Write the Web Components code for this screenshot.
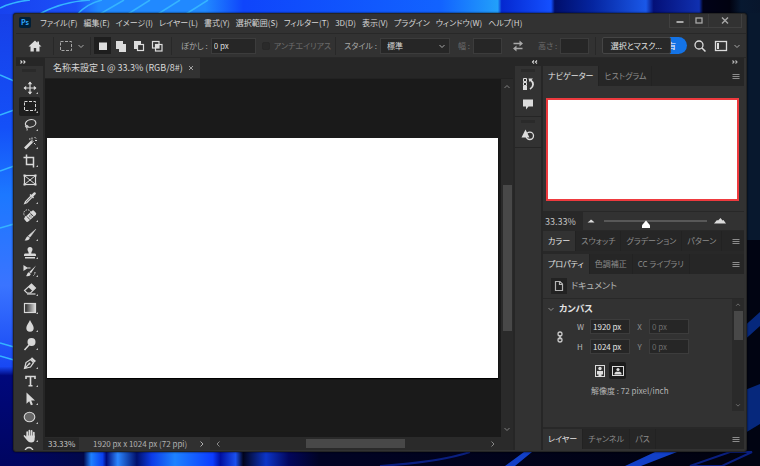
<!DOCTYPE html>
<html lang="ja">
<head>
<meta charset="utf-8">
<title>名称未設定 1</title>
<style>
  html, body { height: 100%; }
  body {
    margin: 0;
    overflow: hidden;
    background: #02051c;
    color: #d6d6d6;
    font-family: "Noto Sans CJK JP", "Open Sans", sans-serif;
    font-size: 8px;
    line-height: 12px;
    font-feature-settings: "palt";
  }
</style>
</head>
<body>
<desk-top>
  <app-window>
    <menu-bar slot="menu"></menu-bar>
    <options-bar slot="options"></options-bar>
    <tool-box></tool-box>
    <doc-view></doc-view>
    <dock-strip></dock-strip>
    <side-panels></side-panels>
  </app-window>
</desk-top>

<script>
// all icons are drawn on a 16x16 grid
const icons = {
  move: '<path d="M8 2v12M2 8h12" stroke="currentColor" stroke-width="1.2"/><path d="M8 1.500l2.300 2.700H5.700zM8 14.500l2.300-2.700H5.700zM1.500 8l2.700-2.300v4.600zM14.500 8l-2.700-2.300v4.600z" fill="currentColor"/>',
  marquee: '<rect x="2.500" y="3.500" width="11" height="9" fill="none" stroke="currentColor" stroke-dasharray="3 1.500"/>',
  lasso: '<ellipse cx="8.500" cy="6.500" rx="5.300" ry="3.700" transform="rotate(-12 8 6)" fill="none" stroke="currentColor" stroke-width="1.200"/><path d="M4 8.500c-1.500 1.500 1 2.600 2 1.200S4 8 4 9.500s1.800 2 1 4" fill="none" stroke="currentColor"/>',
  wand: '<path d="M3 13.500l7-7" stroke="currentColor" stroke-width="2.600"/><path d="M10 2.500v2M13 5.500h2M12.500 2l1.500 1.500M7 4h1.500M12 8l1.500 1.500M9.500 5l2 2" stroke="currentColor"/>',
  crop: '<path d="M4.500 1.500v10h7M1.500 4.500h10v10" fill="none" stroke="currentColor" stroke-width="1.500"/>',
  frame: '<rect x="2.500" y="3.500" width="11" height="9" fill="none" stroke="currentColor" stroke-width="1.200"/><path d="M3 4l10 8M13 4L3 12" stroke="currentColor"/><path d="M1.500 2.500h2v2h-2zM12.500 2.500h2v2h-2zM1.500 11.500h2v2h-2zM12.500 11.500h2v2h-2z" fill="currentColor"/>',
  dropper: '<path d="M9 6L3.500 11.500l-.8 2 2-.8L10 7.300" fill="none" stroke="currentColor" stroke-width="1.200"/><path d="M7.500 5l1-1 1 .7L11.800 2.500c1.300-1 2.800.5 1.800 1.800l-2.300 2.300.7 1-1 1z" fill="currentColor"/>',
  heal: '<circle cx="5.500" cy="5.500" r="3.700" fill="none" stroke="currentColor" stroke-dasharray="1.500 1"/><rect x="1.500" y="5.500" width="13" height="5.500" rx="1.500" transform="rotate(-42 8 8)" fill="currentColor"/><path d="M5 8.500l3 3.200M8.500 5.300l3 3.200M7 8h1M8.500 9h1M8.500 7h1" stroke="#323232" stroke-width=".9"/>',
  brush: '<path d="M13.800 2.200L8 10.300 6.300 8.700z" fill="currentColor" stroke="currentColor" stroke-width=".5"/><path d="M6 9.200l1.700 1.700c0 2-2.700 3-5.200 2.300 1.500-.7 1.200-3.300 3.500-4z" fill="currentColor"/>',
  stamp: '<path d="M5.500 4.500a2.500 2.500 0 015 0c0 1.700-1.300 2-1.200 4H13q1 0 1 1.500v1H2v-1q0-1.500 1-1.500h3.700c.1-2-1.200-2.300-1.200-4zM3 12h10v1.500H3z" fill="currentColor"/>',
  history: '<path d="M14 2.500L9 10.300 7.300 9zM7 9.300l1.700 1.700c-.3 1.900-2.500 2.700-4.700 2 1.400-.7.800-3.200 3-3.700z" fill="currentColor"/><path d="M2 3v4l3-2zM4.500 5h4" fill="currentColor" stroke="currentColor" stroke-width="1.100"/><path d="M13 9c0 2.500-1 3.500-2.500 4" fill="none" stroke="currentColor" stroke-dasharray="1.500 1"/>',
  eraser: '<path d="M2.500 9.500L9.500 3l4 4-5 5H5z" fill="none" stroke="currentColor" stroke-width="1.100"/><path d="M9.500 3l4 4-3 3-4.300-4z" fill="currentColor"/><path d="M5 13h8.500" stroke="currentColor" stroke-width="1.200"/>',
  gradient: '<defs><linearGradient id="g"><stop stop-color="#222"/><stop offset="1" stop-color="#ddd"/></linearGradient></defs><rect x="2.500" y="3.500" width="11" height="9" fill="url(#g)" stroke="currentColor" stroke-width="1.200"/>',
  blur: '<path d="M8 2c1 3 3.700 5 3.700 8a3.700 3.700 0 01-7.400 0C4.300 7 7 5 8 2z" fill="currentColor"/>',
  dodge: '<circle cx="9.500" cy="6" r="4" fill="currentColor"/><path d="M7 9l-4.500 5" stroke="currentColor" stroke-width="1.500"/>',
  pen: '<path d="M2.500 13.500L4 7.500l4.500-3 3 3.200-3 4.300zM2.500 13.500L7.500 8.500" fill="none" stroke="currentColor" stroke-width="1.200"/><circle cx="7.500" cy="8.500" r="1" fill="currentColor"/><path d="M8.500 4l1.500-1.800 4 3.800-1.800 1.500z" fill="currentColor"/>',
  type: '<path d="M4 6V3.500h9V6M8.500 3.500v9M6.500 12.700h4" fill="none" stroke="currentColor" stroke-width="1.600"/>',
  select: '<path d="M4.500 1.500v11.300l2.700-2.500 1.700 4 2-.9-1.700-3.800H13z" fill="currentColor"/>',
  ellipse: '<ellipse cx="7.500" cy="8" rx="5.300" ry="4.700" fill="#666" stroke="currentColor" stroke-width="1.100"/>',
  hand: '<path d="M5.200 9V4M7.400 8V2.500M9.600 8V2.800M11.800 9V4.500M2.500 8l3 3.500" stroke="currentColor" stroke-width="1.700" stroke-linecap="round"/><path d="M4.400 7.500h8.300V11q0 3.500-3.700 3.500-2.500 0-4-2.500z" fill="currentColor"/>',
  zoom: '<circle cx="7" cy="6.500" r="4" fill="none" stroke="currentColor" stroke-width="1.500"/><path d="M10 10l4 4" stroke="currentColor" stroke-width="1.500"/>',
  search: '<circle cx="7" cy="7" r="4" fill="none" stroke="currentColor" stroke-width="1.300"/><path d="M10 10l3.500 3.500" stroke="currentColor" stroke-width="1.500"/>',
  home: '<path d="M8 2.500L1.500 8.500H3.500v5h3.300v-3.500h2.400v3.500h3.300v-5h2L12 6.200V3.500h-1.700v1.200z" fill="currentColor"/>',
  selNew: '<rect x="4" y="4.500" width="8" height="7.500" fill="currentColor"/>',
  selAdd: '<path d="M3 3h7v3h3v8H6v-3H3z" fill="currentColor"/>',
  selSub: '<path d="M3 3h7v3H6v5H3z" fill="currentColor"/><rect x="6.500" y="6.500" width="6" height="6" fill="none" stroke="currentColor" stroke-width="1.200"/>',
  selInt: '<rect x="3.500" y="3.500" width="6.500" height="6.500" fill="none" stroke="currentColor" stroke-width="1.200"/><rect x="6.500" y="6.500" width="6.500" height="6.500" fill="none" stroke="currentColor" stroke-width="1.200"/><rect x="7" y="7" width="3" height="3" fill="currentColor"/>',
  swap: '<path d="M3.500 5.500h7M12.500 10.500h-7" stroke="currentColor" stroke-width="1.500"/><path d="M9.500 2.500L13 5.500l-3.500 3zM6.500 7.500L3 10.500l3.500 3z" fill="currentColor"/>',
  workspace: '<rect x="2.500" y="3.500" width="11" height="9" fill="none" stroke="currentColor" stroke-width="1.300"/><path d="M5 5v6" stroke="currentColor" stroke-width="2"/>',
  down: '<path d="M5.500 7L8 9.500 10.500 7" fill="none" stroke="currentColor"/>',
  up: '<path d="M5.500 9L8 6.500 10.500 9" fill="none" stroke="currentColor"/>',
  left: '<path d="M9.500 5.500L7 8l2.500 2.500" fill="none" stroke="currentColor"/>',
  right: '<path d="M6.500 5.500L9 8l-2.500 2.500" fill="none" stroke="currentColor"/>',
  expand: '<path d="M4.500 6.500L6 8l-1.500 1.500M7.500 6.500L9 8 7.500 9.500" fill="none" stroke="currentColor" stroke-width="1.100"/>',
  collapse: '<path d="M9 6.500L7.500 8 9 9.500M12 6.500L10.500 8 12 9.500" fill="none" stroke="currentColor" stroke-width="1.100"/>',
  menu: '<path d="M4.500 6.500h7M4.500 8.500h7M4.500 10.500h7" stroke="currentColor"/>',
  close: '<path d="M6 6l4 4M10 6l-4 4" stroke="currentColor"/>',
  winMin: '<path d="M4.500 9h7" stroke="currentColor" stroke-width="2"/>',
  winMax: '<rect x="5" y="5" width="6" height="5" fill="none" stroke="currentColor" stroke-width="1.300"/>',
  winClose: '<path d="M5 4.500l6 6M11 4.500l-6 6" stroke="currentColor" stroke-width="1.400"/>',
  historyPanel: '<path d="M3.500 2.500h3v3h-3zM3.500 6.500h3v3h-3z" fill="none" stroke="currentColor"/><path d="M3 10h4v4H3zM8.500 2.500h4.500L9.500 6z" fill="currentColor"/><path d="M10.500 4c3.500 2.500 3.500 6.500-.5 9" fill="none" stroke="currentColor" stroke-width="1.800"/>',
  comment: '<path d="M3 3.500h10v7H8.500L6 13.500v-3H3z" fill="currentColor"/>',
  shapes: '<path d="M5.500 2.500l4 8h-8z" fill="currentColor"/><circle cx="9.800" cy="8.800" r="3.700" fill="none" stroke="currentColor" stroke-width="1.300"/>',
  page: '<path d="M4.500 3.500h4.500l2.500 2.500v6.500h-7zM8.500 3.500v3h3" fill="none" stroke="currentColor" stroke-width="1.200"/>',
  link: '<rect x="6" y="3" width="4" height="4" rx="2" fill="none" stroke="currentColor" stroke-width="1.300"/><rect x="6" y="9" width="4" height="4" rx="2" fill="none" stroke="currentColor" stroke-width="1.300"/><path d="M8 6v4.500" stroke="currentColor" stroke-width="1.500"/>',
  portrait: '<rect x="3.500" y="2.500" width="9" height="11" fill="none" stroke="currentColor"/><circle cx="8" cy="5.500" r="1.700" fill="currentColor"/><path d="M5 8h6v3.500H9.500V13h-3v-1.500H5z" fill="currentColor"/>',
  landscape: '<rect x="2.500" y="3.500" width="11" height="9" fill="none" stroke="currentColor"/><circle cx="8" cy="6.500" r="1.600" fill="currentColor"/><path d="M4.500 11.500V10L6 8.700h4L11.500 10v1.500z" fill="currentColor"/>',
  hillSmall: '<path d="M4.500 9.500l2-1.500 1.500-1.500L10 8l1.500 1.500z" fill="currentColor"/>',
  hillLarge: '<path d="M2 10.500l3-3.500 1 .5L8.500 5l2 2.500 1-.5 2.500 3.500z" fill="currentColor"/>',
};

function tpl(html) {
  const t = document.createElement('template');
  t.innerHTML = html;
  return t;
}

// common rules every shadow root starts with
const base = `
  <style>
    *, :host { box-sizing: border-box; }
    button, input, select {
      margin: 0;
      padding: 0;
      border: 0;
      border-radius: 0;
      outline: none;
      background: none;
      color: inherit;
      font: inherit;
      font-feature-settings: inherit;
    }
    button { display: flex; align-items: center; justify-content: center; white-space: nowrap; }
  </style>
`;

class BaseElement extends HTMLElement {
  constructor() {
    super();
    this._shadowRoot = this.attachShadow({ mode: 'open' });
    this._shadowRoot.appendChild(tpl(base).content.cloneNode(true));
    this._shadowRoot.appendChild(this.constructor.template.content.cloneNode(true));
  }
}

class PsIcon extends HTMLElement {
  constructor() {
    super();
    this.attachShadow({ mode: 'open' });
  }

  static get observedAttributes() {
    return ['name'];
  }

  attributeChangedCallback(name, oldValue, newValue) {
    this.shadowRoot.innerHTML = `
      <style>
        :host { display: block; width: 16px; height: 16px; flex: none; }
        svg { display: block; width: 100%; height: 100%; }
      </style>
      <svg viewBox="0 0 16 16" fill="none" aria-hidden="true">${icons[newValue]}</svg>
    `;
  }
}

class DeskTop extends BaseElement {
  static template = tpl(`
    <style>
      :host { display: grid; height: 100vh; }
      svg, ::slotted(*) { grid-area: 1 / 1; }
      svg { width: 100%; height: 100%; }
      ::slotted(*) { margin: 13px 13px 14px; min-width: 0; min-height: 0; }
    </style>
    <svg viewBox="0 0 760 466" preserveAspectRatio="none" aria-hidden="true">
      <defs>
        <linearGradient id="top">
          <stop offset="0" stop-color="#1742ef"/><stop offset=".1" stop-color="#1c50f8"/>
          <stop offset=".13" stop-color="#2189ff"/><stop offset=".27" stop-color="#2189ff"/>
          <stop offset=".32" stop-color="#0f45fb"/>
          <stop offset=".58" stop-color="#1263ff"/><stop offset=".655" stop-color="#22a0fa"/>
          <stop offset=".66" stop-color="#0428d0"/><stop offset=".725" stop-color="#1450ff"/>
          <stop offset=".73" stop-color="#000e6c"/><stop offset=".78" stop-color="#0525a0"/>
          <stop offset=".85" stop-color="#1a58e8"/><stop offset=".86" stop-color="#041078"/>
          <stop offset=".92" stop-color="#1030b0"/><stop offset=".925" stop-color="#010218"/>
          <stop offset=".96" stop-color="#010210"/><stop offset=".975" stop-color="#071830"/>
          <stop offset="1" stop-color="#08162c"/>
        </linearGradient>
        <linearGradient id="side" x2="0" y2="1">
          <stop offset="0" stop-color="#1740e8"/><stop offset=".25" stop-color="#1450f8"/>
          <stop offset=".4" stop-color="#1c78ff"/><stop offset=".6" stop-color="#3a74ff"/>
          <stop offset=".78" stop-color="#1848f4"/><stop offset=".8" stop-color="#00087c"/>
          <stop offset="1" stop-color="#000560"/>
        </linearGradient>
        <linearGradient id="foot">
          <stop offset="0" stop-color="#000468"/><stop offset=".11" stop-color="#01084a"/>
          <stop offset=".12" stop-color="#1e80ff"/><stop offset=".135" stop-color="#0a40f0"/>
          <stop offset=".14" stop-color="#000a78"/><stop offset=".155" stop-color="#2c86ff"/>
          <stop offset=".18" stop-color="#00106c"/><stop offset=".2" stop-color="#0c3ce8"/>
          <stop offset=".23" stop-color="#1d82ff"/><stop offset=".28" stop-color="#0c3cff"/>
          <stop offset=".29" stop-color="#0010a0"/><stop offset=".31" stop-color="#1a50f0"/>
          <stop offset=".32" stop-color="#02041c"/><stop offset=".35" stop-color="#0c35c8"/>
          <stop offset=".38" stop-color="#02065c"/><stop offset=".42" stop-color="#010324"/>
          <stop offset="1" stop-color="#01020e"/>
        </linearGradient>
      </defs>
      <rect width="760" height="466" fill="url(#foot)"/>
      <rect width="760" height="20" fill="url(#top)"/>
      <rect y="14" width="20" height="452" fill="url(#side)"/>
      <path d="M740 13h20v227h-20z" fill="#08182e"/>
      <path d="M740 240h20v226h-20z" fill="#010412"/>
      <path d="M740 330l20-18v14l-20 18zM740 392l20-8v40l-20 12z" fill="#06287c"/>
      <path d="M625 466l30-14h22l-36 14zM505 466l19-14h8l-17 14z" fill="#1240c8"/>
      <path d="M380 466q60-4 90-14M690 466l40-14h22l-30 14z" fill="none" stroke="#0a1f80" stroke-width="2"/>
      <g fill="none" stroke="#35b4ff" stroke-width="1.500">
        <path d="M0 8Q12 2 30 0M40 14Q60 2 90 0M78 14Q86 4 102 0M100 14L124 0M128 14L150 0M158 14L180 0M186 14L208 0"/>
        <path d="M0 75l14 6M0 115l14-5M0 171l14-5M0 228l14-4M0 343l14 4M0 356l14 4"/>
      </g>
    </svg>
    <slot></slot>
  `);
}

class AppWindow extends BaseElement {
  static template = tpl(`
    <style>
      :host {
        display: flex;
        flex-direction: column;
        border: 1px solid #242424;
        border-radius: 3px;
        background: #323232;
        box-shadow: 0 0 2px #000;
        overflow: hidden;
      }
      main {
        flex: 1;
        min-height: 0;
        display: grid;
        grid-template-columns: 27px minmax(0, 1fr) 26px 201px;
        gap: 2px;
        margin: 0 2px 1px;
        background: #262626;
      }
    </style>
    <slot name="menu"></slot>
    <slot name="options"></slot>
    <main><slot></slot></main>
  `);
}

class MenuBar extends BaseElement {
  static template = tpl(`
    <style>
      :host { display: flex; align-items: flex-start; height: 19px; padding-left: 5px; }
      .logo {
        width: 12px;
        height: 11px;
        margin: 3px 9px 0 0;
        border-radius: 2px;
        background: #001e36;
        color: #31a8ff;
        font-size: 7px;
        line-height: 11px;
        font-weight: 700;
        text-align: center;
      }
      nav { display: flex; gap: 6px; margin-top: 3px; }
      .controls {
        display: flex;
        margin-left: auto;
        margin-right: 4px;
        border: 1px solid #404040;
        border-top: 0;
        color: #a8a8a8;
      }
      .controls button { width: 19px; height: 13px; }
      .controls button + button { border-left: 1px solid #3c3c3c; }
      .controls button:last-child { width: 33px; }
    </style>
    <div class="logo">Ps</div>
    <nav>
      <button>ファイル(F)</button>
      <button>編集(E)</button>
      <button>イメージ(I)</button>
      <button>レイヤー(L)</button>
      <button>書式(Y)</button>
      <button>選択範囲(S)</button>
      <button>フィルター(T)</button>
      <button>3D(D)</button>
      <button>表示(V)</button>
      <button>プラグイン</button>
      <button>ウィンドウ(W)</button>
      <button>ヘルプ(H)</button>
    </nav>
    <div class="controls">
      <button aria-label="最小化"><ps-icon name="winMin"></ps-icon></button>
      <button aria-label="最大化"><ps-icon name="winMax"></ps-icon></button>
      <button aria-label="閉じる"><ps-icon name="winClose"></ps-icon></button>
    </div>
  `);
}

class OptionsBar extends BaseElement {
  static template = tpl(`
    <style>
      :host {
        display: flex;
        align-items: center;
        height: 25px;
        margin: 0 0 0 2px;
        padding: 0 1px 0 2px;
        border-top: 1px solid #282828;
        border-bottom: 1px solid #282828;
        color: #a8a8a8;
      }
      button, label, input, hr { flex: none; }
      hr { width: 1px; height: 18px; margin: 0; border: 0; background: #282828; }
      .light { color: #dcdcdc; }
      .home { margin: 0 10px 0 9px; }
      .preset { margin-left: 4px; }
      .preset + ps-icon { margin: 0 1px 0 -1px; }
      .modes { display: flex; gap: 1px; margin: 0 6px 0 3px; }
      .modes button { width: 17px; height: 17px; }
      .modes .on { background: #1e1e1e; }
      label { white-space: nowrap; }
      input[type="text"], select {
        width: 45px;
        height: 16px;
        margin-left: 3px;
        padding-left: 2px;
        border: 1px solid #3c3c3c;
        background: #262626;
        color: #dcdcdc;
      }
      input.short { width: 29px; }
      .dim { color: #6c6c6c; }
      input[type="checkbox"] {
        appearance: none;
        width: 8px;
        height: 8px;
        margin: 0 4px 0 6px;
        border: 1px solid #282828;
        border-radius: 2px;
        background: #2a2a2a;
      }
      .feather { margin-left: 9px; }
      .rule { margin: 0 8px 0 4px; }
      .width { margin-left: 8px; }
      .end { margin-left: 6px; }
      .pick { display: grid; align-items: center; }
      .pick > * { grid-area: 1 / 1; }
      .pick select { appearance: none; width: 70px; padding-left: 6px; }
      .pick ps-icon { justify-self: end; pointer-events: none; }
      .swap { margin: 0 12px 0 8px; }
      .mask {
        z-index: 1;
        height: 17px;
        margin-left: auto;
        padding: 0 8px;
        border: 1px solid #454545;
        border-radius: 2px;
        background: #282828;
        color: #e4e4e4;
      }
      .share {
        height: 17px;
        margin: 0 5px 0 -9px;
        padding: 0 11px 0 6px;
        border-radius: 9px;
        background: #1473e6;
        color: #fff;
      }
      .space { margin-left: 5px; }
    </style>
    <button class="home light" aria-label="ホーム"><ps-icon name="home"></ps-icon></button>
    <hr>
    <ps-icon class="preset" name="marquee"></ps-icon><ps-icon name="down"></ps-icon>
    <hr>
    <div class="modes light">
      <button class="on" aria-label="新規選択"><ps-icon name="selNew"></ps-icon></button>
      <button aria-label="選択範囲に追加"><ps-icon name="selAdd"></ps-icon></button>
      <button aria-label="一部削除"><ps-icon name="selSub"></ps-icon></button>
      <button aria-label="共通範囲"><ps-icon name="selInt"></ps-icon></button>
    </div>
    <hr>
    <label for="feather" class="feather">ぼかし :</label>
    <input id="feather" type="text" value="0 px">
    <input id="aa" type="checkbox" disabled><label for="aa" class="dim">アンチエイリアス</label>
    <hr class="rule">
    <label for="style">スタイル :</label>
    <div class="pick">
      <select id="style"><option>標準</option></select>
      <ps-icon name="down"></ps-icon>
    </div>
    <label for="w" class="dim width">幅 :</label>
    <input id="w" class="short" type="text" disabled>
    <button class="swap" aria-label="入れ替え"><ps-icon name="swap"></ps-icon></button>
    <label for="h" class="dim">高さ :</label>
    <input id="h" class="short" type="text" disabled>
    <hr class="end">
    <button class="mask">選択とマスク...</button>
    <button class="share">有</button>
    <button class="light" aria-label="検索"><ps-icon name="search"></ps-icon></button>
    <button class="space light" aria-label="ワークスペース"><ps-icon name="workspace"></ps-icon></button>
    <ps-icon name="down"></ps-icon>
  `);
}

class ToolBox extends BaseElement {
  static template = tpl(`
    <style>
      :host {
        display: flex;
        flex-direction: column;
        min-height: 0;
        overflow: hidden;
        background: #323232;
        color: #d8d8d8;
      }
      header { display: flex; align-items: center; height: 8px; background: #262626; }
      .grip { height: 3px; width: 14px; margin: 3px 0 7px 6px; background: #2a2a2a; flex: none; }
      .tools { flex: 1; display: flex; flex-direction: column; min-height: 0; }
      button { position: relative; flex: 1 1 0; min-height: 0; margin: 0 3px; }
      button.on { background: #1e1e1e; border-radius: 2px; }
      button.more::after {
        content: "";
        position: absolute;
        right: 2px;
        bottom: 3px;
        border: 1px solid #c0c0c0;
        border-left-color: transparent;
        border-top-color: transparent;
      }
      .last { flex: none; height: 5px; overflow: hidden; align-items: flex-start; }
    </style>
    <header><ps-icon name="expand"></ps-icon></header>
    <div class="grip"></div>
    <div class="tools"></div>
    <button class="last" aria-label="zoom"><ps-icon name="zoom"></ps-icon></button>
  `);

  constructor() {
    super();
    const tools = ['move', 'marquee', 'lasso', 'wand', 'crop', 'frame', 'dropper', 'heal', 'brush', 'stamp',
      'history', 'eraser', 'gradient', 'blur', 'dodge', 'pen', 'type', 'select', 'ellipse', 'hand'];
    this.shadowRoot.querySelector('.tools').innerHTML = tools.map(t => `
      <button aria-label="${t}" class="${t === 'marquee' ? 'on' : ''} ${t === 'frame' ? '' : 'more'}">
        <ps-icon name="${t}"></ps-icon>
      </button>`).join('');
  }
}

class DocView extends BaseElement {
  static template = tpl(`
    <style>
      :host {
        display: grid;
        grid-template: 21px minmax(0, 1fr) 13px / minmax(0, 1fr) 12px;
        background: #2a2a2a;
        color: #d6d6d6;
      }
      header { grid-column: 1 / 3; display: flex; border-bottom: 1px solid #222; background: #262626; }
      .tab { display: flex; align-items: center; padding: 0 1px 0 8px; background: #323232; font-size: 9px; }
      .tab ps-icon { color: #a0a0a0; }
      .stage { display: flex; align-items: center; padding: 0 3px 0 2px; background: #1a1a1a; }
      .paper { flex: 1; aspect-ratio: 1920 / 1024; background: #fff; box-shadow: 0 1px 1px #000; }
      .vbar { display: flex; flex-direction: column; align-items: center; color: #808080; }
      .vbar i { flex: 147; width: 9px; background: #484848; }
      .vgap { flex: 90; }
      footer { grid-column: 1 / 3; display: flex; align-items: center; }
      .zoom { width: 34px; padding-left: 3px; background: #262626; color: #c8c8c8; }
      .info { flex: none; display: flex; align-items: center; width: 131px; height: 13px; padding-left: 14px; background: #303030; color: #b0b0b0; }
      .info ps-icon { margin-left: auto; }
      .hbar { flex: 1; display: flex; align-items: center; color: #888; padding-right: 12px; }
      .hbar i { flex: 101; height: 9px; background: #484848; }
      .hgap { flex: 81; }
    </style>
    <header>
      <div class="tab"><span>名称未設定 1 @ 33.3% (RGB/8#)</span><ps-icon name="close"></ps-icon></div>
    </header>
    <div class="stage"><div class="paper"></div></div>
    <div class="vbar">
      <ps-icon name="up"></ps-icon><span class="vgap"></span><i></i><span class="vgap"></span><ps-icon name="down"></ps-icon>
    </div>
    <footer>
      <div class="zoom">33.33%</div>
      <div class="info"><span>1920 px x 1024 px (72 ppi)</span><ps-icon name="right"></ps-icon></div>
      <div class="hbar">
        <ps-icon name="left"></ps-icon><span class="hgap"></span><i></i><span class="hgap"></span><ps-icon name="right"></ps-icon>
      </div>
    </footer>
  `);
}

class DockStrip extends BaseElement {
  static template = tpl(`
    <style>
      :host { display: flex; flex-direction: column; background: #323232; color: #dcdcdc; }
      header { display: flex; align-items: center; justify-content: flex-end; height: 8px; background: #262626; }
      section {
        display: flex;
        flex-direction: column;
        align-items: center;
        gap: 4px;
        padding: 3px 0 4px;
        border-bottom: 1px solid #252525;
      }
      .grip { width: 14px; height: 3px; background: #2a2a2a; }
    </style>
    <header><ps-icon name="collapse"></ps-icon></header>
    <section>
      <div class="grip"></div>
      <button aria-label="ヒストリー"><ps-icon name="historyPanel"></ps-icon></button>
      <button aria-label="コメント"><ps-icon name="comment"></ps-icon></button>
    </section>
    <section>
      <div class="grip"></div>
      <button aria-label="シェイプ"><ps-icon name="shapes"></ps-icon></button>
    </section>
  `);
}

class PanelTab extends BaseElement {
  static template = tpl(`
    <style>
      :host { display: flex; }
      button { padding: 0 5px; border-right: 1px solid #222; }
      :host([active]) button { background: #323232; color: #e4e4e4; }
    </style>
    <button><slot></slot></button>
  `);
}

class TabStrip extends BaseElement {
  static template = tpl(`
    <style>
      :host { display: flex; height: 20px; background: #262626; color: #8c8c8c; flex: none; }
      .more { margin-left: auto; }
    </style>
    <slot></slot>
    <button class="more" aria-label="パネルメニュー"><ps-icon name="menu"></ps-icon></button>
  `);
}

class SidePanels extends BaseElement {
  static template = tpl(`
    <style>
      :host { display: flex; flex-direction: column; min-height: 0; padding-bottom: 1px; background: #323232; color: #b4b4b4; }
      header { display: flex; align-items: center; justify-content: flex-end; height: 8px; background: #262626; }
      .navigator { padding: 12px 5px 10px 3px; }
      .view { aspect-ratio: 194 / 104; border: 2px solid #ee3a3e; background: #fff; }
      .zoom { display: flex; align-items: center; height: 20px; border-top: 1px solid #282828; border-bottom: 1px solid #282828; color: #dcdcdc; }
      .zoom input[type="text"] { width: 40px; height: 100%; padding-left: 2px; background: #282828; color: #c4c4c4; font-size: 9px; }
      .zoom input[type="range"] {
        appearance: none;
        flex: 1;
        min-width: 0;
        height: 12px;
        margin: 0 5px;
      }
      input[type="range"]::-webkit-slider-runnable-track { height: 2px; background: #585858; }
      input[type="range"]::-webkit-slider-thumb {
        appearance: none;
        width: 8px;
        height: 8px;
        background: #fff;
        clip-path: polygon(50% 0, 100% 60%, 100% 100%, 0 100%, 0 60%);
      }
      .zoom ps-icon:last-child { margin-right: 16px; }
      .gap { height: 3px; background: #282828; flex: none; }
      .doc { display: flex; align-items: center; gap: 4px; height: 25px; padding-left: 8px; border-bottom: 1px solid #282828; font-size: 9px; }
      .doc span { display: flex; background: #222; }
      .props { display: grid; grid-template-columns: minmax(0, 1fr) 12px; height: 112px; }
      h2 { display: flex; align-items: center; height: 16px; margin: 2px 0; font-size: 9px; font-weight: 700; color: #e4e4e4; }
      h2 ps-icon { color: #909090; }
      .size { display: grid; grid-template-columns: 34px 13px 40px 19px 40px; align-items: center; row-gap: 5px; }
      .size ps-icon { grid-row: 1 / 3; justify-self: center; color: #c8c8c8; }
      .size input { height: 15px; padding-left: 2px; border: 1px solid #3c3c3c; background: #262626; color: #e4e4e4; }
      .size input:disabled { color: #6c6c6c; }
      label.far { justify-self: center; color: #8c8c8c; }
      .orient { display: flex; gap: 1px; margin: 8px 0 6px 48px; color: #dcdcdc; }
      .orient button { width: 17px; height: 17px; }
      .orient .on { background: #1c1c1c; border-radius: 2px; }
      .res { margin: 0 0 0 48px; }
      .bar { display: flex; flex-direction: column; align-items: center; background: #2a2a2a; color: #808080; }
      .bar i { width: 9px; height: 29px; background: #484848; }
      .bar ps-icon { height: 12px; }
      .bar ps-icon:last-child { margin-top: auto; }
      .fill { flex: 1; min-height: 0; border-bottom: 2px solid #282828; }
    </style>
    <header><ps-icon name="expand"></ps-icon></header>
    <tab-strip>
      <panel-tab active>ナビゲーター</panel-tab>
      <panel-tab>ヒストグラム</panel-tab>
    </tab-strip>
    <div class="navigator"><div class="view"></div></div>
    <div class="zoom">
      <input type="text" value="33.33%" aria-label="ズーム">
      <ps-icon name="hillSmall"></ps-icon>
      <input type="range" min="0" max="100" value="40" aria-label="ズームスライダー">
      <ps-icon name="hillLarge"></ps-icon>
    </div>
    <tab-strip>
      <panel-tab active>カラー</panel-tab>
      <panel-tab>スウォッチ</panel-tab>
      <panel-tab>グラデーション</panel-tab>
      <panel-tab>パターン</panel-tab>
    </tab-strip>
    <div class="gap"></div>
    <tab-strip>
      <panel-tab active>プロパティ</panel-tab>
      <panel-tab>色調補正</panel-tab>
      <panel-tab>CC ライブラリ</panel-tab>
    </tab-strip>
    <div class="doc"><span><ps-icon name="page"></ps-icon></span>ドキュメント</div>
    <div class="props">
      <div>
        <h2><ps-icon name="down"></ps-icon>カンバス</h2>
        <div class="size">
          <ps-icon name="link"></ps-icon>
          <label for="w">W</label><input id="w" type="text" value="1920 px">
          <label for="x" class="far">X</label><input id="x" type="text" value="0 px" disabled>
          <label for="h">H</label><input id="h" type="text" value="1024 px">
          <label for="y" class="far">Y</label><input id="y" type="text" value="0 px" disabled>
        </div>
        <div class="orient">
          <button aria-label="縦置き"><ps-icon name="portrait"></ps-icon></button>
          <button class="on" aria-label="横置き"><ps-icon name="landscape"></ps-icon></button>
        </div>
        <p class="res">解像度 : 72 pixel/inch</p>
      </div>
      <div class="bar"><ps-icon name="up"></ps-icon><i></i><ps-icon name="down"></ps-icon></div>
    </div>
    <div class="fill"></div>
    <tab-strip>
      <panel-tab active>レイヤー</panel-tab>
      <panel-tab>チャンネル</panel-tab>
      <panel-tab>パス</panel-tab>
    </tab-strip>
  `);
}

customElements.define('ps-icon', PsIcon);
customElements.define('panel-tab', PanelTab);
customElements.define('tab-strip', TabStrip);
customElements.define('menu-bar', MenuBar);
customElements.define('options-bar', OptionsBar);
customElements.define('tool-box', ToolBox);
customElements.define('doc-view', DocView);
customElements.define('dock-strip', DockStrip);
customElements.define('side-panels', SidePanels);
customElements.define('app-window', AppWindow);
customElements.define('desk-top', DeskTop);
</script>
</body>
</html>
